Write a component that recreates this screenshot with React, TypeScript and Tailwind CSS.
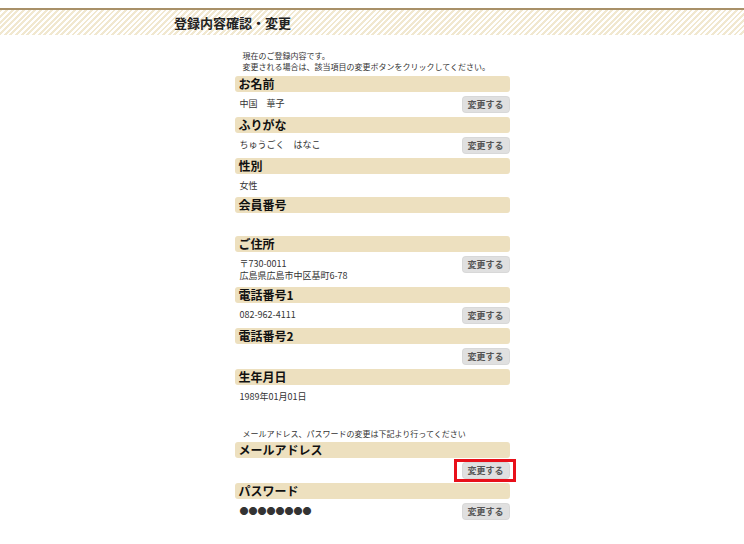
import React from 'react';

interface Item {
  label: string;
  lines: string[];
  editable: boolean;
  highlight?: boolean;
}

const PROFILE: Item[] = [
  { label: 'お名前', lines: ['中国　華子'], editable: true },
  { label: 'ふりがな', lines: ['ちゅうごく　はなこ'], editable: true },
  { label: '性別', lines: ['女性'], editable: false },
  { label: '会員番号', lines: [''], editable: false },
  { label: 'ご住所', lines: ['〒730-0011', '広島県広島市中区基町6-78'], editable: true },
  { label: '電話番号1', lines: ['082-962-4111'], editable: true },
  { label: '電話番号2', lines: [''], editable: true },
  { label: '生年月日', lines: ['1989年01月01日'], editable: false },
];

const ACCOUNT: Item[] = [
  { label: 'メールアドレス', lines: [''], editable: true, highlight: true },
  { label: 'パスワード', lines: ['●●●●●●●●'], editable: true },
];

const EditButton: React.FC<{ highlight?: boolean }> = ({ highlight }) => (
  <div className="relative flex">
    <button className="block w-[46px] h-[15px] rounded-[3px] bg-[#e0e0e0] text-[9px] font-bold leading-[15px] text-[#555] shadow-[0_0_0_1px_#d8d8d8]">
      変更する
    </button>
    {highlight && (
      <span className="absolute -left-[9px] -right-[7px] -top-[4px] -bottom-[4px] border-[3px] border-[#e8101a]" />
    )}
  </div>
);

const Section: React.FC<{ item: Item }> = ({ item }) => (
  <div>
    <div className="h-[16px] rounded-[3px] bg-[#ede0bf] pl-[4px] text-[12px] font-bold leading-[16px] text-[#111]">
      {item.label}
    </div>
    <div className="flex items-start justify-between pt-[5px] pb-[5px] pl-[5px] pr-[1px]">
      <div className="pt-[1px] text-[9px] leading-[12px] text-[#333]">
        {item.lines.map((line, i) => (
          <div key={i} className="min-h-[12px]">{line}</div>
        ))}
      </div>
      {item.editable && <EditButton highlight={item.highlight} />}
    </div>
  </div>
);

export default function App() {
  return (
    <div
      className="min-h-[544px] bg-white"
      style={{ fontFamily: '"Noto Sans CJK JP", "Noto Sans", sans-serif' }}
    >
      <div className="pt-[8px]">
        <div className="h-[2px] bg-[#a89068]" />
        <div className="h-[25px] bg-[repeating-linear-gradient(135deg,#f1e8d0_0px,#f1e8d0_2px,#ffffff_2px,#ffffff_4px)]">
          <div className="mx-auto w-[396px] text-[13px] font-bold leading-[25px] text-[#222]">
            登録内容確認・変更
          </div>
        </div>
      </div>

      <div className="mx-auto w-[275px] pt-[15px]">
        <div className="pl-[8px] text-[8px] leading-[11px] text-[#333] mb-[4px]">
          <div>現在のご登録内容です。</div>
          <div>変更される場合は、該当項目の変更ボタンをクリックしてください。</div>
        </div>
        {PROFILE.map((item) => (
          <Section key={item.label} item={item} />
        ))}
        <div className="pt-[20px] pl-[8px] text-[8px] leading-[11px] text-[#333] mb-[3px]">
          メールアドレス、パスワードの変更は下記より行ってください
        </div>
        {ACCOUNT.map((item) => (
          <Section key={item.label} item={item} />
        ))}
      </div>
    </div>
  );
}
